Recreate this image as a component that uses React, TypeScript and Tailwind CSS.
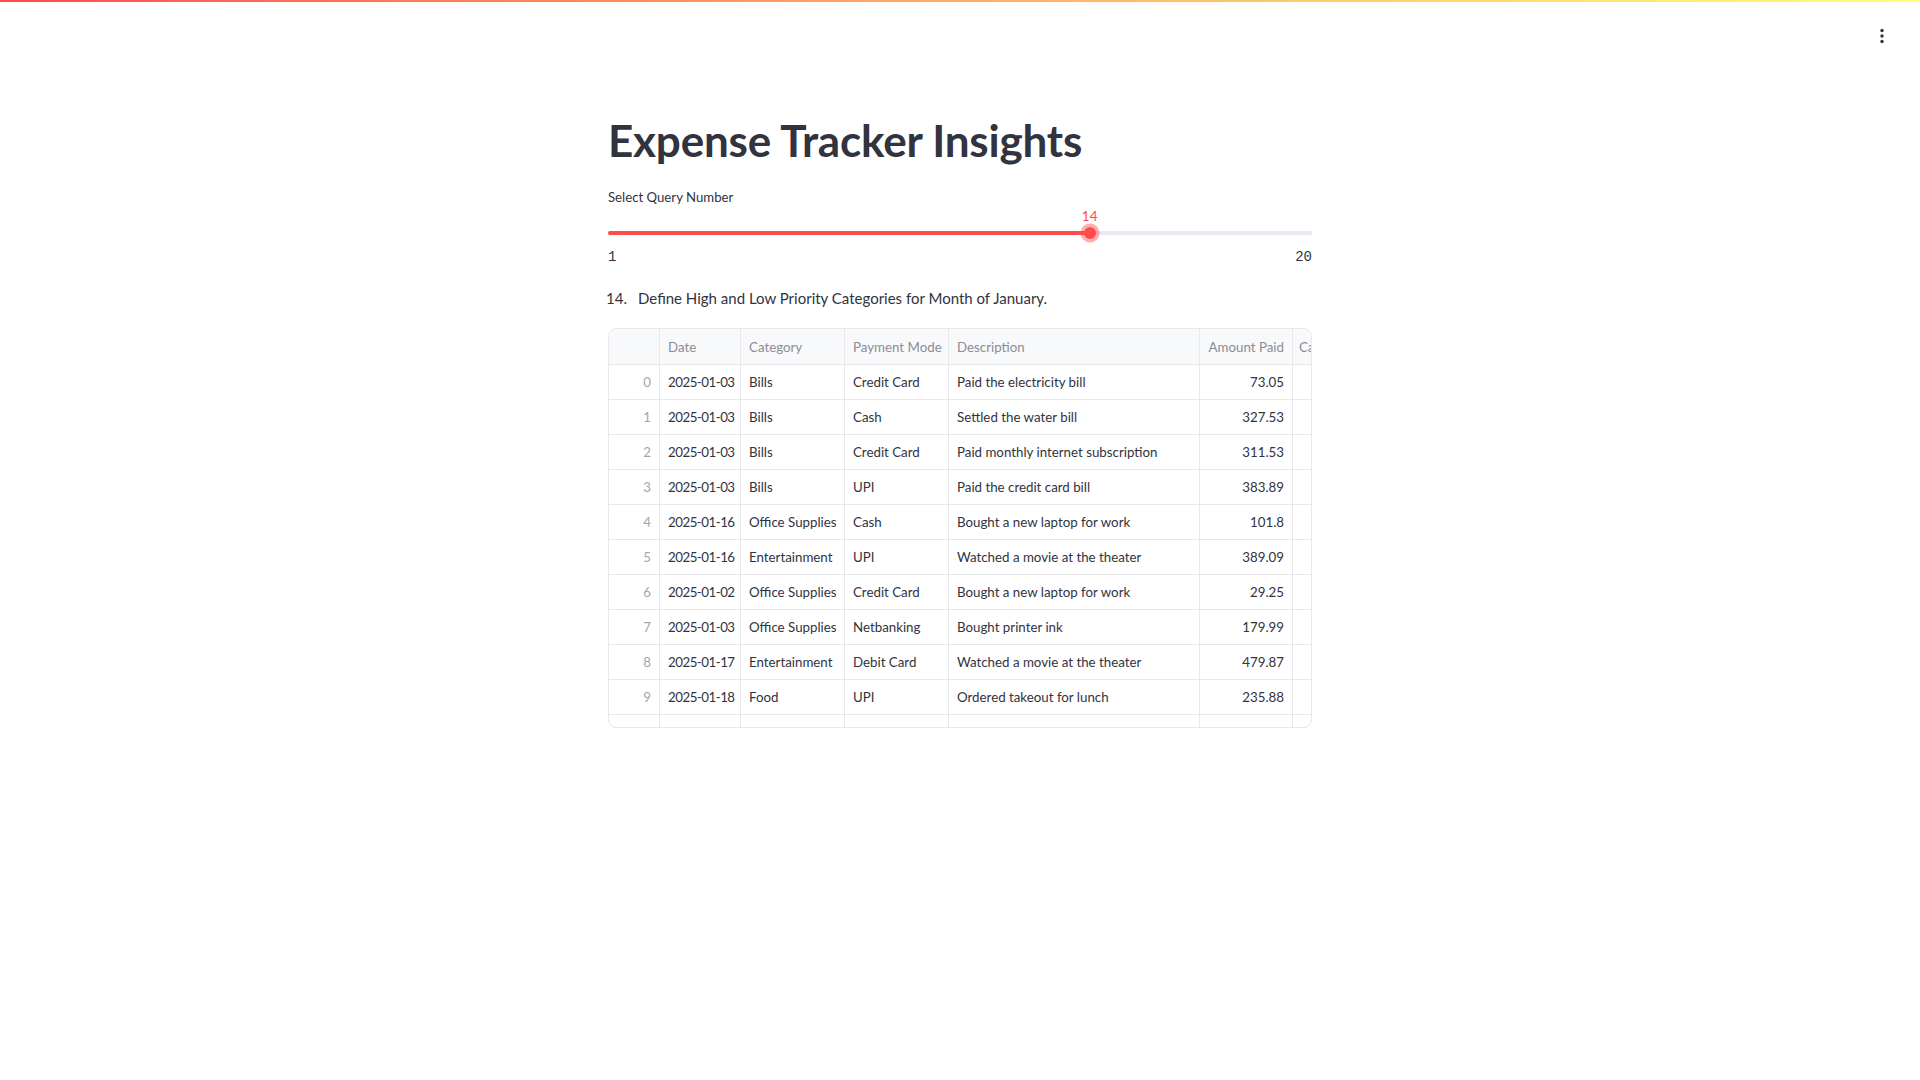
import React from 'react';

interface Expense {
  date: string;
  category: string;
  mode: string;
  description: string;
  amount: string;
}

const rows: Expense[] = [
  { date: '2025-01-03', category: 'Bills', mode: 'Credit Card', description: 'Paid the electricity bill', amount: '73.05' },
  { date: '2025-01-03', category: 'Bills', mode: 'Cash', description: 'Settled the water bill', amount: '327.53' },
  { date: '2025-01-03', category: 'Bills', mode: 'Credit Card', description: 'Paid monthly internet subscription', amount: '311.53' },
  { date: '2025-01-03', category: 'Bills', mode: 'UPI', description: 'Paid the credit card bill', amount: '383.89' },
  { date: '2025-01-16', category: 'Office Supplies', mode: 'Cash', description: 'Bought a new laptop for work', amount: '101.8' },
  { date: '2025-01-16', category: 'Entertainment', mode: 'UPI', description: 'Watched a movie at the theater', amount: '389.09' },
  { date: '2025-01-02', category: 'Office Supplies', mode: 'Credit Card', description: 'Bought a new laptop for work', amount: '29.25' },
  { date: '2025-01-03', category: 'Office Supplies', mode: 'Netbanking', description: 'Bought printer ink', amount: '179.99' },
  { date: '2025-01-17', category: 'Entertainment', mode: 'Debit Card', description: 'Watched a movie at the theater', amount: '479.87' },
  { date: '2025-01-18', category: 'Food', mode: 'UPI', description: 'Ordered takeout for lunch', amount: '235.88' },
];

const FONT = "font-['Lato','Noto_Sans',sans-serif]";
const MONO = "font-['Liberation_Mono','DejaVu_Sans_Mono',monospace]";

const cell = 'h-full flex items-center border-r border-[#e8e8eb] px-2 pt-[2px] whitespace-nowrap overflow-hidden';

const QuerySlider: React.FC<{ value: number; min: number; max: number }> = ({ value, min, max }) => {
  const pct = ((value - min) / (max - min)) * 100;
  return (
    <div className="flex flex-col">
      {/* Value above thumb */}
      <div className="relative h-[19px]">
        <span
          className="absolute top-0 -translate-x-1/2 text-[13.5px] leading-[20px] text-[#ff4b4b]"
          style={{ left: `${pct}%` }}
        >
          {value}
        </span>
      </div>
      {/* Track */}
      <div className="relative h-4 flex items-center">
        <div className="w-full h-1 rounded-full bg-[#e5e9f0]">
          <div className="h-1 rounded-full bg-[#ff4b4b]" style={{ width: `${pct}%` }} />
        </div>
        <div
          className="absolute top-1/2 -translate-x-1/2 -translate-y-1/2 w-3 h-3 rounded-full bg-[#ff4b4b] shadow-[0_0_0_3.5px_rgba(255,75,75,0.45)]"
          style={{ left: `${pct}%` }}
        />
      </div>
      {/* Min / Max */}
      <div className={`flex justify-between mt-[6px] h-5 text-sm leading-5 text-[#31333f] ${MONO}`}>
        <span>{min}</span>
        <span>{max}</span>
      </div>
    </div>
  );
};

const ExpenseTable: React.FC = () => (
  <div className="h-[400px] border border-[#e8e8eb] rounded-lg overflow-hidden text-[13.3px] text-[#31333f]">
    {/* Header */}
    <div className="flex h-9 border-b border-[#e8e8eb] bg-[#f8f9fb] text-[#8b8d95]">
      <div className={`${cell} w-[51px] shrink-0`} />
      <div className={`${cell} w-[81px] shrink-0`}>Date</div>
      <div className={`${cell} w-[104px] shrink-0`}>Category</div>
      <div className={`${cell} w-[104px] shrink-0`}>Payment Mode</div>
      <div className={`${cell} w-[251px] shrink-0`}>Description</div>
      <div className={`${cell} w-[93px] shrink-0 justify-end`}>Amount Paid</div>
      <div className="h-full flex items-center pl-[6px] pt-[2px] whitespace-nowrap overflow-hidden">Category Priority</div>
    </div>

    {rows.map((r, i) => (
      <div key={i} className="flex h-[35px] border-b border-[#e8e8eb]">
        <div className={`${cell} w-[51px] shrink-0 justify-end text-[#a4a5ab]`}>{i}</div>
        <div className={`${cell} w-[81px] shrink-0 tracking-[-0.5px]`}>{r.date}</div>
        <div className={`${cell} w-[104px] shrink-0`}>{r.category}</div>
        <div className={`${cell} w-[104px] shrink-0`}>{r.mode}</div>
        <div className={`${cell} w-[251px] shrink-0`}>{r.description}</div>
        <div className={`${cell} w-[93px] shrink-0 justify-end`}>{r.amount}</div>
        <div className="h-full flex-1" />
      </div>
    ))}

    {/* partially scrolled row */}
    <div className="flex h-[35px]">
      <div className={`${cell} w-[51px] shrink-0`} />
      <div className={`${cell} w-[81px] shrink-0`} />
      <div className={`${cell} w-[104px] shrink-0`} />
      <div className={`${cell} w-[104px] shrink-0`} />
      <div className={`${cell} w-[251px] shrink-0`} />
      <div className={`${cell} w-[93px] shrink-0`} />
      <div className="h-full flex-1" />
    </div>
  </div>
);

export default function App() {
  return (
    <div className={`relative min-h-screen bg-white text-[#31333f] ${FONT}`}>
      {/* top decoration */}
      <div className="h-[2px] bg-gradient-to-r from-[#ff4b4b] to-[#fffd80]" />

      {/* main menu */}
      <button className="absolute top-[24px] right-[26px] w-6 h-6 flex items-center justify-center text-[#31333f]">
        <svg width="6" height="16" viewBox="0 0 6 16" fill="currentColor">
          <circle cx="3" cy="2.5" r="1.7" />
          <circle cx="3" cy="8" r="1.7" />
          <circle cx="3" cy="13.5" r="1.7" />
        </svg>
      </button>

      <main className="mx-auto w-[704px] pt-[112px] pb-16">
        <h1 className="text-[44px] leading-[53px] font-bold tracking-[-0.2px] text-[#31333f]">
          Expense Tracker Insights
        </h1>

        <div className="mt-[20px] text-[13.2px] leading-[21px]">Select Query Number</div>
        <div className="-mt-[2px]">
          <QuerySlider value={14} min={1} max={20} />
        </div>

        <div className="mt-[19px] flex text-[15px] leading-6 -ml-[2px]">
          <span className="w-[32px] shrink-0">14.</span>
          <span>Define High and Low Priority Categories for Month of January.</span>
        </div>

        <div className="mt-[18px]">
          <ExpenseTable />
        </div>
      </main>
    </div>
  );
}
